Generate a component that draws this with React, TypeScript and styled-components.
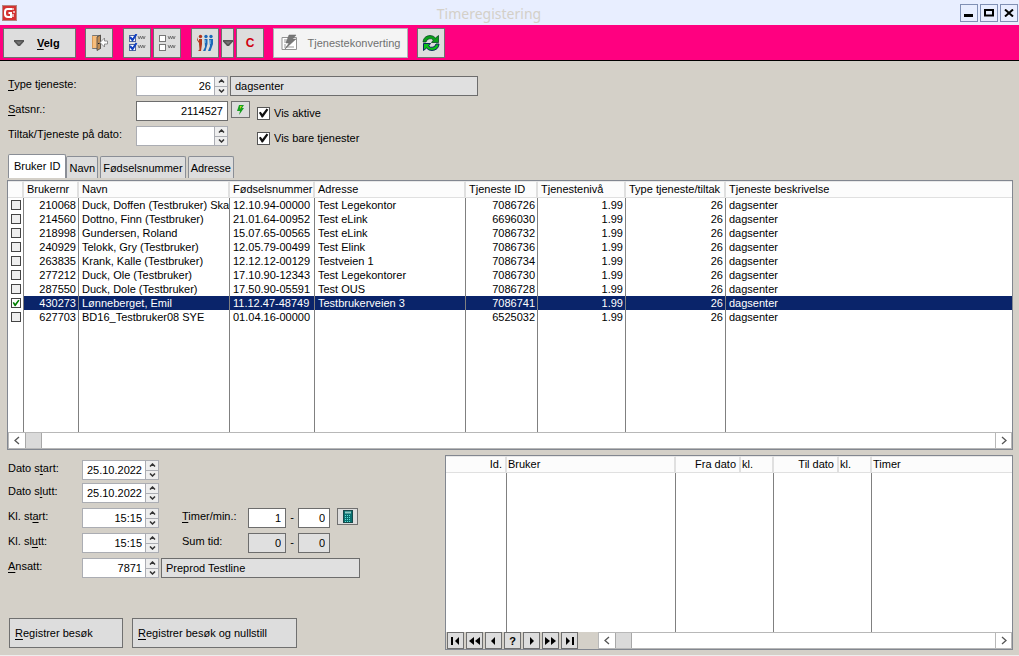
import React from "react";
import styled, { createGlobalStyle, css } from "styled-components";

const GlobalStyle = createGlobalStyle`
  *, *::before, *::after { box-sizing: border-box; }
  body {
    margin: 0;
    background: #d4d0c8;
    color: #000;
    font: 11px/14px "Liberation Sans", Arial, sans-serif;
  }
  button, input { font: inherit; color: inherit; border-radius: 0; margin: 0; }
  u { text-underline-offset: 2px; }
  svg { display: block; flex: none; }
`;

const Window = styled.div`
  min-height: 100vh;
  display: flex;
  flex-direction: column;
  border-bottom: 1px solid #eeeeee;
`;

const TitleBar = styled.header`
  display: flex;
  align-items: center;
  height: 25px;
  padding: 0 1px 0 2px;
  background: #e8eeff;
`;

const Title = styled.h1`
  flex: 1;
  margin: 0;
  padding-top: 2px;
  text-align: center;
  font: 400 14px/20px "Noto Sans", sans-serif;
  color: #d4d0c8;
`;

const WindowButtons = styled.div`
  display: flex;
  gap: 2px;
  padding-top: 1px;
`;

const WindowButton = styled.button`
  width: 18px;
  height: 18px;
  padding: 0;
  display: grid;
  place-items: center;
  border: 1px solid #8090b4;
  background: #e8eeff;
`;

const Toolbar = styled.nav`
  display: flex;
  align-items: center;
  gap: 9px;
  height: 36px;
  padding: 0 3px;
  background: #ff0080;
  border-bottom: 1px solid #000;
`;

const ToolGroup = styled.div`
  display: flex;
  gap: 2px;
  padding-left: 1px;
`;

const ToolButton = styled.button<{ $width?: number }>`
  display: flex;
  align-items: center;
  justify-content: center;
  width: ${(p) => p.$width ?? 28}px;
  height: 30px;
  padding: 0;
  border: 1px solid #707070;
  background: #dddddd;
  &:disabled {
    gap: 9px;
    background: #f4f4f4;
    border-color: #adb2b5;
    color: #707070;
  }
`;

const PickButton = styled(ToolButton)`
  justify-content: flex-start;
  gap: 13px;
  padding-left: 10px;
`;

const PickLabel = styled.b`
  font-size: 11px;
`;

const RedLetter = styled.b`
  font-size: 12px;
  color: #d00010;
`;

const Content = styled.main`
  flex: 1;
  display: flex;
  flex-direction: column;
  padding: 15px 6px 5px 7px;
`;

const FilterGrid = styled.section`
  display: grid;
  grid-template-columns: 128px 92px 29px 1fr;
  grid-auto-rows: 20px;
  row-gap: 5px;
  padding-left: 1px;
  align-items: start;
`;

const FieldLabel = styled.label`
  line-height: 16px;
  white-space: nowrap;
`;

const Field = styled.input<{ $width?: string; $right?: boolean }>`
  width: ${(p) => p.$width ?? "100%"};
  height: 20px;
  padding: 0 4px;
  border: 1px solid #6d6d6d;
  background: #fff;
  text-align: ${(p) => (p.$right ? "right" : "left")};
  outline: none;
  &:read-only { background: #e0e0e0; }
`;

const DescriptionSlot = styled.div`
  grid-column: 3 / 5;
  padding-left: 2px;
`;

const SpinBox = styled.div`
  display: flex;
  width: 100%;
  height: 20px;
  border: 1px solid #abadb3;
  background: #fff;
`;

const SpinInput = styled.input`
  flex: 1;
  min-width: 0;
  padding: 0 3px;
  border: 0;
  outline: none;
  background: #fff;
  text-align: right;
`;

const SpinButtons = styled.div`
  display: flex;
  flex-direction: column;
  width: 13px;
  border-left: 1px solid #abadb3;
  background: #abadb3;
  gap: 1px;
`;

const SpinButton = styled.button`
  flex: 1;
  padding: 0;
  border: 0;
  display: grid;
  place-items: center;
  min-height: 0;
  background: #eeeeee;
`;

const SmallButton = styled.button<{ $width: number }>`
  width: ${(p) => p.$width}px;
  height: 17px;
  padding: 0;
  display: grid;
  place-items: center;
  border: 1px solid #707070;
  background: #dddddd;
`;

const LookupSlot = styled.div`
  padding-left: 3px;
`;

const CheckLabel = styled.label`
  grid-column: 4;
  display: flex;
  align-items: center;
  gap: 4px;
  padding-top: 5px;
`;

const tick = css`
  &:checked::before {
    content: "";
    display: block;
    width: 100%;
    height: 100%;
    background: currentColor;
    clip-path: polygon(8% 48%, 24% 38%, 40% 58%, 78% 8%, 94% 20%, 44% 92%, 34% 92%);
  }
`;

const CheckBox = styled.input`
  appearance: none;
  width: 13px;
  height: 13px;
  border: 1px solid #555;
  background: #fff;
  color: #111;
  ${tick}
`;

const RowCheck = styled(CheckBox)`
  display: block;
  width: 10px;
  height: 10px;
  border-color: #444;
  background: #eeeeee;
  color: #008000;
  &:checked { background: #fff; }
`;

const Tabs = styled.div`
  display: flex;
  align-items: flex-end;
  gap: 2px;
  margin: 8px 0 2px;
  padding: 0 1px;
`;

const Tab = styled.button<{ $active?: boolean }>`
  height: ${(p) => (p.$active ? 24 : 22)}px;
  margin-right: ${(p) => (p.$active ? -2 : 0)}px;
  padding: 0 ${(p) => (p.$active ? 5 : 2)}px ${(p) => (p.$active ? 2 : 0)}px;
  border: 1px solid #8a8e96;
  border-bottom: 0;
  border-radius: 2px 2px 0 0;
  background: ${(p) => (p.$active ? "#fff" : "#dddddd")};
`;

const Panel = styled.section`
  min-width: 0;
  display: flex;
  flex-direction: column;
  border: 1px solid #828790;
  background: #fff;
`;

const Grid = styled.table`
  width: 100%;
  table-layout: fixed;
  border-collapse: separate;
  border-spacing: 0;
`;

const HeadCell = styled.th<{ $right?: boolean; $start?: number }>`
  height: 17px;
  padding: 0 3px 1px ${(p) => p.$start ?? 3}px;
  border-right: 2px solid #e0e0e0;
  border-bottom: 1px solid #e0e0e0;
  border-top: 1px solid #e8e8e8;
  background: #fcfcfc;
  font-weight: 400;
  line-height: 14px;
  text-align: ${(p) => (p.$right ? "right" : "left")};
  white-space: nowrap;
  overflow: hidden;
  &:last-child { border-right: 0; }
`;

const Cell = styled.td<{ $right?: boolean; $divider?: boolean }>`
  height: 14px;
  padding: 0 ${(p) => (p.$right ? 2 : 0)}px 0 3px;
  border-right: ${(p) => (p.$divider === false ? "0" : "1px solid #808080")};
  line-height: 14px;
  text-align: ${(p) => (p.$right ? "right" : "left")};
  white-space: nowrap;
  overflow: hidden;
  &:last-child { border-right: 0; }
`;

const Row = styled.tr<{ $selected?: boolean }>`
  ${(p) =>
    p.$selected &&
    css`
      ${Cell}:not(:first-child) { background: #0a246a; color: #fff; }
    `}
`;

const FillerRow = styled.tr<{ $height: number }>`
  height: ${(p) => p.$height}px;
`;

const ScrollTrack = styled.div`
  flex: 1 0 auto;
  display: flex;
  height: 17px;
  border: 1px solid #b8b8b8;
  border-left: 0;
  border-right: 0;
  background: #fff;
`;

const ScrollArrow = styled.button<{ $end?: boolean }>`
  width: 17px;
  padding: 0;
  display: grid;
  place-items: center;
  border: 0 solid #b8b8b8;
  border-width: ${(p) => (p.$end ? "0 1px 0 1px" : "0 0 0 1px")};
  margin-left: ${(p) => (p.$end ? "auto" : "0")};
  background: #fff;
`;

const ScrollThumb = styled.div`
  width: 17px;
  border: 1px solid #a8a8a8;
  border-width: 0 1px;
  background: #dadada;
`;

const Lower = styled.div`
  flex: 1;
  display: flex;
  margin-top: 5px;
`;

const EntryForm = styled.form`
  width: 438px;
  flex: none;
  display: flex;
  flex-direction: column;
  gap: 5px;
  padding: 5px 0 2px 1px;
`;

const DateRows = styled.div`
  display: flex;
  flex-direction: column;
  gap: 3px;
`;

const EntryRow = styled.div`
  display: grid;
  grid-template-columns: 74px 77px 2px auto;
  align-items: start;
`;

const Duration = styled.div`
  grid-column: 4;
  display: grid;
  grid-template-columns: 66px 38px 12px 32px 28px;
  padding-left: 21px;
  align-items: start;
`;

const Dash = styled.span`
  line-height: 18px;
  text-align: center;
`;

const CalcSlot = styled.div`
  padding-left: 7px;
`;

const Actions = styled.div`
  display: flex;
  gap: 9px;
  margin-top: auto;
  padding-left: 1px;
`;

const ActionButton = styled.button<{ $width: number }>`
  width: ${(p) => p.$width}px;
  height: 30px;
  padding: 0 5px;
  text-align: left;
  border: 1px solid #707070;
  background: #dddddd;
`;

const VisitPanel = styled(Panel)`
  flex: 1;
`;

const Navigator = styled.div`
  display: flex;
  margin-top: auto;
  background: #d4d0c8;
`;

const NavButtons = styled.div`
  display: flex;
  gap: 2px;
  padding: 0 20px 0 1px;
`;

const SpinArrow = ({ down }: { down?: boolean }) => (
  <svg width="7" height="4" viewBox="0 0 7 4" fill="none" stroke="#333" strokeWidth="1.5">
    <path d={down ? "M1 .5 3.5 3 6 .5" : "M1 3.5 3.5 1 6 3.5"} />
  </svg>
);

const DownTriangle = () => (
  <svg width="10" height="6" viewBox="0 0 10 6">
    <path d="M0 0H10V1.5L6 6H4L0 1.5Z" fill="#555" />
    <path d="M2 1.5H8L5 4.5Z" fill="#777" />
  </svg>
);

const Logo = () => (
  <svg width="16" height="16" viewBox="0 0 16 16" aria-hidden="true">
    <rect x=".5" y=".5" width="14" height="15" fill="#d33232" stroke="#b88480" />
    <path d="M10 4H5.5Q3 4 3 7V9Q3 12 6 12H9V8H6.5" fill="none" stroke="#fff" strokeWidth="2" />
    <path d="M11 7H13M11 9V12M11 3V5" stroke="#f5dada" strokeWidth="1.5" />
  </svg>
);

const DoorIcon = () => (
  <svg width="17" height="17" viewBox="0 0 17 17">
    <path d="M1.5 1.5H9.5V14.5H1.5Z" fill="#8c8c8c" stroke="#777" />
    <path d="M1 2H6V14H1Z" fill="#f7bd7c" />
    <path d="M1.500 2V14" stroke="#d89a58" />
    <path d="M6 3 9.500 1V14.500L6 16.500Z" fill="#c08c54" stroke="#444" strokeWidth=".8" />
    <path d="M7 9.500H8.500" stroke="#222" />
    <path d="M16.500 7V10H13.500V13L9 8.500 13.500 4V7Z" fill="#fff" stroke="#777" strokeWidth=".8" />
  </svg>
);

const ListIcon = ({ checked }: { checked?: boolean }) => (
  <svg width="18" height="17" viewBox="0 0 18 17" fill="none">
    {[2, 11].map((y) => (
      <g key={y}>
        <rect x="1.5" y={y - 0.5} width="6" height="6" fill="#fff" stroke={checked ? "#52669c" : "#777"} />
        {checked && <path d={`M2 ${y + 1}l2.500 3 4-6`} stroke="#1140c0" strokeWidth="2" />}
        <path d={`M10 ${y}l1.200 3 1.200-3 1.200 3 1.200-3 1.200 3 1.200-3`} stroke="#555" strokeWidth=".7" />
      </g>
    ))}
  </svg>
);

const PeopleIcon = () => (
  <svg width="18" height="18" viewBox="0 0 18 18">
    <g fill="#b3361c">
      <circle cx="4.500" cy="2.500" r="1.700" />
      <path d="M3 5H6V10L5 17H2L3.500 15.500 3 10Z" />
      <path d="M1 3 2 6 3 7V9L1 6Z" />
    </g>
    <g fill="#1c68b8">
      <circle cx="10" cy="2.500" r="1.700" />
      <circle cx="15" cy="2.500" r="1.700" />
      <path d="M8.500 5H11.500V10L9.500 17H7L9 13Z" />
      <path d="M13 5H17V10L14.500 17H12L14 12Z" />
    </g>
    <path d="M9 6V9M14 6V10" stroke="#8fd0f4" />
  </svg>
);

const ConvertIcon = () => (
  <svg width="18" height="17" viewBox="0 0 18 17">
    <path d="M1 3.500H15.500V15.500H1Z" fill="#fff" stroke="#929292" />
    <path d="M3 6H7M3 8H6M3 11H5M3 13H13" stroke="#999" />
    <path d="M8 1H15L11.500 5H15L4 15 8 9H5Z" fill="#777" stroke="#666" strokeWidth=".5" />
  </svg>
);

const RefreshIcon = () => (
  <svg width="18" height="18" viewBox="0 0 18 18">
    <path d="M1 8Q1.500 2 8 1.500 11.500 1.500 13.500 4L16.500 1.500V8.500H9.500L11.500 6Q9.500 4 7 4.800 4.500 5.500 4 8Z" fill="#0aa018" stroke="#074a23" strokeWidth=".8" />
    <path d="M17 10Q16.500 16 10 16.500 6.500 16.500 4.500 14L1.500 16.500V9.500H8.500L6.500 12Q8.500 14 11 13.200 13.500 12.500 14 10Z" fill="#0ac018" stroke="#08285c" strokeWidth="1" />
  </svg>
);

const BoltIcon = () => (
  <svg width="9" height="10" viewBox="0 0 9 10">
    <path d="M3 0H8L6 3H8L3 10 4 6H1Z" fill="#18a020" />
    <path d="M4 1H6L4 4Z" fill="#b8e020" />
  </svg>
);

const CalculatorIcon = () => (
  <svg width="10" height="13" viewBox="0 0 10 13">
    <rect x=".5" y=".5" width="9" height="12" fill="#08706f" stroke="#17494a" />
    <path d="M2 2.500H8" stroke="#8fc9c4" strokeWidth="2" />
    <path d="M2 5.500H8M2 7.500H8M2 9.500H8M2 11.500H8" stroke="#5ee0d8" strokeDasharray="1 1" />
  </svg>
);

const navIcons: [string, string][] = [
  ["Første", "M1 1H3V9H1ZM9 1V9L5 5Z"],
  ["Forrige side", "M5 1V9L0 5ZM11 1V9L6 5Z"],
  ["Forrige", "M7 1V9L3 5Z"],
  ["Søk", ""],
  ["Neste", "M4 1V9L8 5Z"],
  ["Neste side", "M0 1V9L5 5ZM6 1V9L11 5Z"],
  ["Siste", "M2 1V9L6 5ZM8 1H10V9H8Z"],
];

const Spin = ({ id, value }: { id: string; value: string }) => (
  <SpinBox>
    <SpinInput id={id} defaultValue={value} />
    <SpinButtons>
      <SpinButton type="button" aria-label="Opp"><SpinArrow /></SpinButton>
      <SpinButton type="button" aria-label="Ned"><SpinArrow down /></SpinButton>
    </SpinButtons>
  </SpinBox>
);

const Chevron = ({ right }: { right?: boolean }) => (
  <svg width="6" height="9" viewBox="0 0 6 9" fill="none" stroke="#555" strokeWidth="1.300">
    <path d={right ? "M1 1 5 4.500 1 8" : "M5 1 1 4.500 5 8"} />
  </svg>
);

const ScrollBar = () => (
  <ScrollTrack>
    <ScrollArrow type="button" aria-label="Rull til venstre"><Chevron /></ScrollArrow>
    <ScrollThumb />
    <ScrollArrow type="button" $end aria-label="Rull til høyre"><Chevron right /></ScrollArrow>
  </ScrollTrack>
);

const userColumns = [
  { name: "Brukernr", width: 55, right: true },
  { name: "Navn", width: 151 },
  { name: "Fødselsnummer", width: 85 },
  { name: "Adresse", width: 151 },
  { name: "Tjeneste ID", width: 72, right: true },
  { name: "Tjenestenivå", width: 88, right: true },
  { name: "Type tjeneste/tiltak", width: 100, right: true },
  { name: "Tjeneste beskrivelse", width: undefined },
];

const users = [
  ["210068", "Duck, Doffen (Testbruker) Ska", "12.10.94-00000", "Test Legekontor", "7086726"],
  ["214560", "Dottno, Finn (Testbruker)", "21.01.64-00952", "Test eLink", "6696030"],
  ["218998", "Gundersen, Roland", "15.07.65-00565", "Test eLink", "7086732"],
  ["240929", "Telokk, Gry (Testbruker)", "12.05.79-00499", "Test Elink", "7086736"],
  ["263835", "Krank, Kalle (Testbruker)", "12.12.12-00129", "Testveien 1", "7086734"],
  ["277212", "Duck, Ole (Testbruker)", "17.10.90-12343", "Test Legekontorer", "7086730"],
  ["287550", "Duck, Dole (Testbruker)", "17.50.90-05591", "Test OUS", "7086728"],
  ["430273", "Lønneberget, Emil", "11.12.47-48749", "Testbrukerveien 3", "7086741"],
  ["627703", "BD16_Testbruker08 SYE", "01.04.16-00000", "", "6525032"],
].map((r) => [...r, "1.99", "26", "dagsenter"]);

const visitColumns = [
  { name: "Id.", width: 61, right: true },
  { name: "Bruker", width: 169 },
  { name: "Fra dato", width: 65, right: true, divider: false },
  { name: "kl.", width: 33 },
  { name: "Til dato", width: 65, right: true, divider: false },
  { name: "kl.", width: 33 },
  { name: "Timer", width: undefined },
];

const UserTable = () => (
  <Panel>
    <Grid>
      <colgroup>
        <col width={16} />
        {userColumns.map((c) => <col key={c.name} width={c.width} />)}
      </colgroup>
      <thead>
        <tr>
          <HeadCell />
          {userColumns.map((c) => <HeadCell key={c.name}>{c.name}</HeadCell>)}
        </tr>
      </thead>
      <tbody>
        {users.map((row) => (
          <Row key={row[0]} $selected={row[0] === "430273"}>
            <Cell><RowCheck type="checkbox" aria-label={row[1]} defaultChecked={row[0] === "430273"} /></Cell>
            {row.map((text, i) => <Cell key={i} $right={userColumns[i].right}>{text}</Cell>)}
          </Row>
        ))}
        <FillerRow $height={108} aria-hidden="true">
          <Cell />
          {userColumns.map((c) => <Cell key={c.name} />)}
        </FillerRow>
      </tbody>
    </Grid>
    <ScrollBar />
  </Panel>
);

const VisitTable = () => (
  <VisitPanel>
    <Grid>
      <colgroup>
        {visitColumns.map((c, i) => <col key={i} width={c.width} />)}
      </colgroup>
      <thead>
        <tr>
          {visitColumns.map((c, i) => <HeadCell key={i} $right={c.right} $start={1}>{c.name}</HeadCell>)}
        </tr>
      </thead>
      <tbody>
        <FillerRow $height={159} aria-hidden="true">
          {visitColumns.map((c, i) => <Cell key={i} $divider={c.divider} />)}
        </FillerRow>
      </tbody>
    </Grid>
    <Navigator>
      <NavButtons>
        {navIcons.map(([name, d]) => (
          <SmallButton key={name} type="button" $width={17} aria-label={name}>
            {d ? <svg width="11" height="10" viewBox="0 0 11 10"><path d={d} /></svg> : <b>?</b>}
          </SmallButton>
        ))}
      </NavButtons>
      <ScrollBar />
    </Navigator>
  </VisitPanel>
);

export default function App() {
  return (
    <Window>
      <GlobalStyle />
      <TitleBar>
        <Logo />
        <Title>Timeregistering</Title>
        <WindowButtons>
          <WindowButton aria-label="Minimer">
            <svg width="10" height="10" viewBox="0 0 10 10"><path d="M0 6H9V9H0Z" /></svg>
          </WindowButton>
          <WindowButton aria-label="Maksimer">
            <svg width="10" height="8" viewBox="0 0 10 8"><path d="M1 1H9V6.500H1Z" fill="none" stroke="#000" strokeWidth="2" /></svg>
          </WindowButton>
          <WindowButton aria-label="Lukk">
            <svg width="10" height="8" viewBox="0 0 10 8"><path d="M1 .5 9 7.500M9 .5 1 7.500" stroke="#000" strokeWidth="2" /></svg>
          </WindowButton>
        </WindowButtons>
      </TitleBar>
      <Toolbar>
        <PickButton $width={73}><DownTriangle /><PickLabel><u>V</u>elg</PickLabel></PickButton>
        <ToolButton aria-label="Avslutt"><DoorIcon /></ToolButton>
        <ToolGroup>
          <ToolButton aria-label="Merk alle"><ListIcon checked /></ToolButton>
          <ToolButton aria-label="Fjern merking"><ListIcon /></ToolButton>
        </ToolGroup>
        <ToolGroup>
          <ToolButton aria-label="Brukere"><PeopleIcon /></ToolButton>
          <ToolButton $width={13} aria-label="Flere valg"><DownTriangle /></ToolButton>
          <ToolButton><RedLetter>C</RedLetter></ToolButton>
        </ToolGroup>
        <ToolButton $width={135} disabled><ConvertIcon />Tjenestekonverting</ToolButton>
        <ToolButton aria-label="Oppdater"><RefreshIcon /></ToolButton>
      </Toolbar>
      <Content>
        <FilterGrid>
          <FieldLabel htmlFor="type"><u>T</u>ype tjeneste:</FieldLabel>
          <Spin id="type" value="26" />
          <DescriptionSlot>
            <Field $width="248px" readOnly aria-label="Tjeneste" value="dagsenter" />
          </DescriptionSlot>
          <FieldLabel htmlFor="sats"><u>S</u>atsnr.:</FieldLabel>
          <Field id="sats" $right defaultValue="2114527" />
          <LookupSlot><SmallButton $width={19} aria-label="Slå opp sats"><BoltIcon /></SmallButton></LookupSlot>
          <CheckLabel><CheckBox type="checkbox" defaultChecked />Vis aktive</CheckLabel>
          <FieldLabel htmlFor="dato">Tiltak/Tjeneste på dato:</FieldLabel>
          <Spin id="dato" value="" />
          <CheckLabel><CheckBox type="checkbox" defaultChecked />Vis bare tjenester</CheckLabel>
        </FilterGrid>
        <Tabs role="tablist">
          <Tab role="tab" aria-selected="true" $active>Bruker ID</Tab>
          <Tab role="tab">Navn</Tab>
          <Tab role="tab">Fødselsnummer</Tab>
          <Tab role="tab">Adresse</Tab>
        </Tabs>
        <UserTable />
        <Lower>
          <EntryForm onSubmit={(e) => e.preventDefault()}>
            <DateRows>
              <EntryRow>
                <FieldLabel htmlFor="ds">Dato s<u>t</u>art:</FieldLabel>
                <Spin id="ds" value="25.10.2022" />
              </EntryRow>
              <EntryRow>
                <FieldLabel htmlFor="de">Dato s<u>l</u>utt:</FieldLabel>
                <Spin id="de" value="25.10.2022" />
              </EntryRow>
            </DateRows>
            <EntryRow>
              <FieldLabel htmlFor="ks">Kl. st<u>a</u>rt:</FieldLabel>
              <Spin id="ks" value="15:15" />
              <Duration>
                <FieldLabel htmlFor="hours"><u>T</u>imer/min.:</FieldLabel>
                <Field id="hours" $right defaultValue="1" />
                <Dash>-</Dash>
                <Field $right aria-label="Minutter" defaultValue="0" />
                <CalcSlot><SmallButton type="button" $width={21} aria-label="Beregn"><CalculatorIcon /></SmallButton></CalcSlot>
              </Duration>
            </EntryRow>
            <EntryRow>
              <FieldLabel htmlFor="ke">Kl. sl<u>u</u>tt:</FieldLabel>
              <Spin id="ke" value="15:15" />
              <Duration>
                <FieldLabel htmlFor="sum">Sum tid:</FieldLabel>
                <Field id="sum" $right readOnly value="0" />
                <Dash>-</Dash>
                <Field $right readOnly aria-label="Sum minutter" value="0" />
              </Duration>
            </EntryRow>
            <EntryRow>
              <FieldLabel htmlFor="staff"><u>A</u>nsatt:</FieldLabel>
              <Spin id="staff" value="7871" />
              <span />
              <Field $width="199px" readOnly aria-label="Navn på ansatt" value="Preprod Testline" />
            </EntryRow>
            <Actions>
              <ActionButton $width={114}><u>R</u>egistrer besøk</ActionButton>
              <ActionButton $width={165}><u>R</u>egistrer besøk og nullstill</ActionButton>
            </Actions>
          </EntryForm>
          <VisitTable />
        </Lower>
      </Content>
    </Window>
  );
}
